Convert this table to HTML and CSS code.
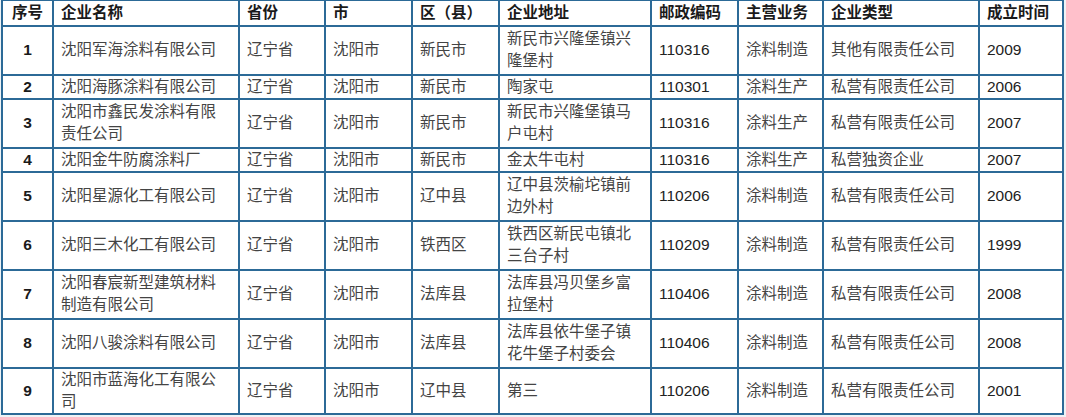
FILE: index.html
```html
<!DOCTYPE html>
<html lang="zh-CN">
<head>
<meta charset="utf-8">
<title>沈阳涂料企业名录</title>
<link rel="stylesheet" href="styles.css">
</head>
<body>
<table class="grid">
  <colgroup>
    <col class="c-no"><col class="c-name"><col class="c-prov"><col class="c-city"><col class="c-dist">
    <col class="c-addr"><col class="c-zip"><col class="c-biz"><col class="c-type"><col class="c-year">
  </colgroup>
  <thead>
    <tr class="h-head">
      <th class="center">序号</th><th>企业名称</th><th>省份</th><th>市</th><th>区（县）</th>
      <th>企业地址</th><th>邮政编码</th><th>主营业务</th><th>企业类型</th><th>成立时间</th>
    </tr>
  </thead>
  <tbody>
    <tr class="h-tall">
      <td class="no">1</td><td>沈阳军海涂料有限公司</td><td>辽宁省</td><td>沈阳市</td><td>新民市</td>
      <td>新民市兴隆堡镇兴<br>隆堡村</td><td class="num">110316</td><td>涂料制造</td><td>其他有限责任公司</td><td class="num">2009</td>
    </tr>
    <tr class="h-short">
      <td class="no">2</td><td>沈阳海豚涂料有限公司</td><td>辽宁省</td><td>沈阳市</td><td>新民市</td>
      <td>陶家屯</td><td class="num">110301</td><td>涂料生产</td><td>私营有限责任公司</td><td class="num">2006</td>
    </tr>
    <tr class="h-tall">
      <td class="no">3</td><td>沈阳市鑫民发涂料有限<br>责任公司</td><td>辽宁省</td><td>沈阳市</td><td>新民市</td>
      <td>新民市兴隆堡镇马<br>户屯村</td><td class="num">110316</td><td>涂料生产</td><td>私营有限责任公司</td><td class="num">2007</td>
    </tr>
    <tr class="h-short">
      <td class="no">4</td><td>沈阳金牛防腐涂料厂</td><td>辽宁省</td><td>沈阳市</td><td>新民市</td>
      <td>金太牛屯村</td><td class="num">110316</td><td>涂料生产</td><td>私营独资企业</td><td class="num">2007</td>
    </tr>
    <tr class="h-tall">
      <td class="no">5</td><td>沈阳星源化工有限公司</td><td>辽宁省</td><td>沈阳市</td><td>辽中县</td>
      <td>辽中县茨榆坨镇前<br>边外村</td><td class="num">110206</td><td>涂料制造</td><td>私营有限责任公司</td><td class="num">2006</td>
    </tr>
    <tr class="h-tall">
      <td class="no">6</td><td>沈阳三木化工有限公司</td><td>辽宁省</td><td>沈阳市</td><td>铁西区</td>
      <td>铁西区新民屯镇北<br>三台子村</td><td class="num">110209</td><td>涂料制造</td><td>私营有限责任公司</td><td class="num">1999</td>
    </tr>
    <tr class="h-tall">
      <td class="no">7</td><td>沈阳春宸新型建筑材料<br>制造有限公司</td><td>辽宁省</td><td>沈阳市</td><td>法库县</td>
      <td>法库县冯贝堡乡富<br>拉堡村</td><td class="num">110406</td><td>涂料制造</td><td>私营有限责任公司</td><td class="num">2008</td>
    </tr>
    <tr class="h-tall">
      <td class="no">8</td><td>沈阳八骏涂料有限公司</td><td>辽宁省</td><td>沈阳市</td><td>法库县</td>
      <td>法库县依牛堡子镇<br>花牛堡子村委会</td><td class="num">110406</td><td>涂料制造</td><td>私营有限责任公司</td><td class="num">2008</td>
    </tr>
    <tr class="h-last">
      <td class="no">9</td><td>沈阳市蓝海化工有限公<br>司</td><td>辽宁省</td><td>沈阳市</td><td>辽中县</td>
      <td>第三</td><td class="num">110206</td><td>涂料制造</td><td>私营有限责任公司</td><td class="num">2001</td>
    </tr>
  </tbody>
</table>
</body>
</html>
```

FILE: styles.css
```css
html, body {
  margin: 0;
  padding: 0;
  background: #eef3f6;
}

body {
  font-family: "Liberation Sans", "Noto Sans CJK SC", sans-serif;
  font-size: 15.5px;
  color: #444;
}

.grid {
  border-collapse: collapse;
  table-layout: fixed;
  width: 1062px;
  margin: 0 0 0 1px;
  background: #fff;
}

.grid th,
.grid td {
  border: 2px solid #2c6a97;
  padding: 0 4px 0 7px;
  line-height: 22px;
  text-align: left;
  vertical-align: middle;
  white-space: nowrap;
  overflow: hidden;
}

.grid th {
  font-weight: bold;
  color: #1a1a1a;
}

.grid thead th { border-top-width: 1px; }

.c-no   { width: 51px; }
.c-name { width: 186px; }
.c-prov { width: 86px; }
.c-city { width: 87px; }
.c-dist { width: 87px; }
.c-addr { width: 152px; }
.c-zip  { width: 87px; }
.c-biz  { width: 85px; }
.c-type { width: 156px; }
.c-year { width: 84px; }

.h-head  { height: 25px; }
.h-tall  { height: 49px; }
.h-short { height: 24px; }
.h-last  { height: 46px; }

.grid .center,
.grid .no {
  text-align: center;
  padding: 0;
}

.grid .no {
  font-weight: bold;
  color: #1a1a1a;
}

.num { color: #222; }
```
